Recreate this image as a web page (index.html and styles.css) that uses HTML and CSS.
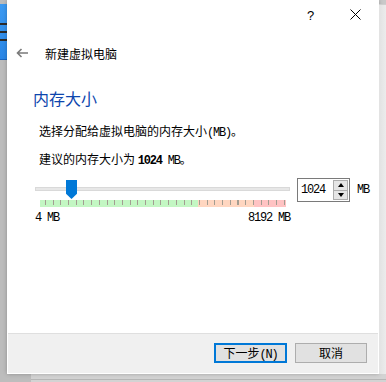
FILE: index.html
```html
<!DOCTYPE html>
<html lang="zh-CN">
<head>
<meta charset="UTF-8">
<title>新建虚拟电脑</title>
<link rel="stylesheet" href="styles.css">
</head>
<body>

<div class="desktop">
  <div class="side-left">
    <div class="blue-win"><i></i><i></i><i></i></div>
  </div>

  <div class="dialog">
    <div class="titlebar">
      <span class="tb-btn help">?</span>
      <span class="tb-btn close">
        <svg width="11" height="11" viewBox="0 0 11 11"><path d="M0.5 0.5 L10.5 10.5 M10.5 0.5 L0.5 10.5" stroke="#000" stroke-width="1"/></svg>
      </span>
    </div>

    <div class="header">
      <svg class="back" width="12" height="10" viewBox="0 0 12 10"><path d="M12 5 H2 M5.5 1 L1.5 5 L5.5 9" stroke="#7a7a7a" stroke-width="1.6" fill="none"/></svg>
      <span class="header-title">新建虚拟电脑</span>
    </div>

    <div class="content">
      <h1 class="heading">内存大小</h1>
      <p class="line first">选择分配给虚拟电脑的内存大小<span class="mono">(MB)</span>。</p>
      <p class="line second">建议的内存大小为 <b class="mono">1024</b><span class="mono"> MB</span>。</p>

      <div class="mem-row">
        <div class="slider">
          <div class="track"></div>
          <div class="thumb"></div>
          <div class="scale"></div>
          <div class="limits">
            <span class="mono">4 MB</span>
            <span class="mono">8192 MB</span>
          </div>
        </div>
        <div class="spinbox">
          <span class="spin-value mono">1024</span>
          <div class="spin-btns">
            <span class="spin up"></span>
            <span class="spin down"></span>
          </div>
        </div>
        <span class="unit mono">MB</span>
      </div>
    </div>

    <div class="footer">
      <button class="btn default">下一步<span class="mono">(N)</span></button>
      <button class="btn">取消</button>
    </div>
  </div>

  <div class="side-right"></div>
</div>
<div class="under"><div class="under-line"></div></div>

</body>
</html>
```

FILE: styles.css
```css
body {
  margin: 0;
  padding: 0;
  background-color: #c9c9c9;
  font-family: "Noto Sans CJK SC", "Liberation Sans", sans-serif;
  font-size: 12px;
  color: #000;
  overflow: hidden;
}

.mono {
  font-family: "Liberation Mono", "Noto Sans CJK SC", monospace;
  font-size: 12px;
  letter-spacing: -1.2px;
}

.desktop {
  display: flex;
  height: 374px;
}

.side-left {
  width: 7px;
  background-color: #bcbcbc;
  padding-top: 4px;
}
.blue-win {
  height: 56px;
  background: linear-gradient(#3c9af2, #2a86e6);
  border-bottom: 1px solid #1a66c4;
  padding-top: 19px;
  box-sizing: border-box;
}
.blue-win i {
  display: block;
  height: 2px;
  background-color: #2c2c2c;
  margin-bottom: 6px;
}

.side-right {
  width: 7px;
  background: linear-gradient(to right, #e2e2e2, #ececec);
  border-top: 1px solid #cfcfcf;
  margin-top: 4px;
}

.under {
  height: 8px;
  background: linear-gradient(to right, #bdbdbd 31px, #d3d3d3 31px);
  padding-top: 5px;
  box-sizing: border-box;
}
.under-line {
  margin-left: 31px;
  height: 1px;
  background-color: #b6b6b6;
}

.dialog {
  width: 372px;
  box-sizing: border-box;
  background-color: #fff;
  border: 1px solid #fff;
  border-top: 0;
  display: flex;
  flex-direction: column;
  box-shadow: 0 0 4px rgba(0,0,0,0.25);
}

.titlebar {
  height: 34px;
  display: flex;
  justify-content: flex-end;
}
.tb-btn {
  width: 45px;
  height: 29px;
  display: flex;
  align-items: center;
  justify-content: center;
}
.help {
  font-family: "Liberation Sans", sans-serif;
  font-size: 13px;
  padding-top: 1px;
}

.header {
  height: 40px;
  display: flex;
  align-items: center;
  padding-left: 8px;
}
.back {
  margin-right: 17px;
  margin-top: -2px;
}
.header-title {
  line-height: 16px;
}

.content {
  padding-left: 25px;
}
.heading {
  margin: 14px 0 0;
  font-size: 16px;
  font-weight: normal;
  line-height: 20px;
  color: #0d45ad;
}
.line {
  margin: 0;
  padding-left: 6px;
  line-height: 16px;
}
.first {
  margin-top: 15px;
}
.second {
  margin-top: 10px;
}
.second b {
  font-weight: bold;
}

.mem-row {
  margin-top: 9px;
  display: flex;
  align-items: flex-start;
}
.slider {
  position: relative;
  width: 255px;
  margin-left: 2px;
}
.track {
  margin-top: 9px;
  height: 4px;
  background-color: #e7e7e7;
  box-shadow: inset 0 0 0 1px #d9d9d9;
}
.thumb {
  position: absolute;
  left: 31px;
  top: 2px;
  width: 11px;
  height: 19px;
  background-color: #0078d7;
  clip-path: polygon(0 0, 100% 0, 100% 72%, 50% 100%, 0 72%);
}
.scale {
  margin: 9px 4px 0 5px;
  height: 7px;
  background-image:
    repeating-linear-gradient(to right, transparent 0, transparent 5px, #a39d92 5px, #a39d92 6px, transparent 6px, transparent 7.7px),
    linear-gradient(to right, #c3f7c3 158px, #ffd6c0 158px, #ffd6c0 214px, #ffc3c3 214px);
  background-size: 100% 5px, 100% 7px;
  background-repeat: no-repeat;
}
.limits {
  margin-top: 5px;
  display: flex;
  justify-content: space-between;
  line-height: 12px;
}

.spinbox {
  margin-left: 7px;
  width: 53px;
  height: 24px;
  box-sizing: border-box;
  border: 1px solid #7a7a7a;
  display: flex;
  align-items: center;
  justify-content: space-between;
  padding: 0 1px 0 3px;
}
.spin-value {
  line-height: 14px;
}
.spin-btns {
  width: 15px;
  height: 20px;
  display: flex;
  flex-direction: column;
}
.spin {
  flex: 1;
  border: 1px solid #adadad;
  background-color: #e5e5e5;
  display: flex;
  align-items: center;
  justify-content: center;
}
.spin.down {
  border-top: 0;
}
.spin.up::after {
  content: "";
  border-left: 3px solid transparent;
  border-right: 3px solid transparent;
  border-bottom: 4px solid #000;
}
.spin.down::after {
  content: "";
  border-left: 3px solid transparent;
  border-right: 3px solid transparent;
  border-top: 4px solid #000;
}
.unit {
  margin-left: 7px;
  line-height: 24px;
}

.footer {
  margin-top: auto;
  height: 40px;
  box-sizing: border-box;
  background-color: #f0f0f0;
  border-top: 1px solid #dfdfdf;
  display: flex;
  justify-content: flex-end;
  align-items: flex-start;
  gap: 8px;
  padding: 9px 11px 0 0;
}
.btn {
  width: 72px;
  height: 20px;
  box-sizing: border-box;
  margin: 0;
  padding: 0;
  font-family: "Noto Sans CJK SC", sans-serif;
  font-size: 12px;
  line-height: 16px;
  color: #000;
  background-color: #e1e1e1;
  border: 1px solid #adadad;
}
.btn.default {
  width: 73px;
  border: 2px solid #0078d7;
}
```
